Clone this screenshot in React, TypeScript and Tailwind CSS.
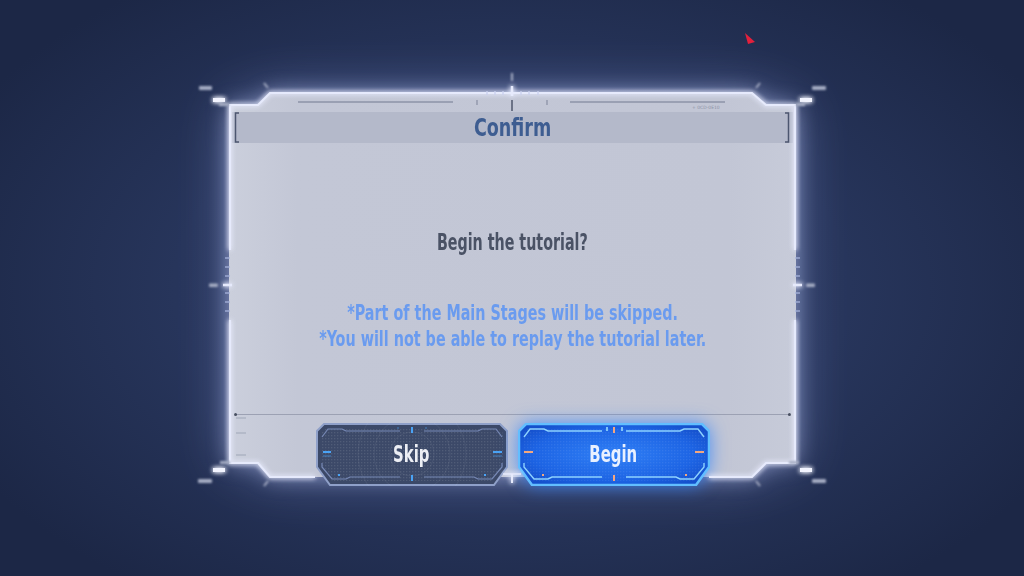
import type { ReactNode } from "react";

const FONT = "[font-family:'DejaVu_Sans_Condensed','DejaVu_Sans',sans-serif]";

// narrow game-style lettering: condensed bold squeezed horizontally
function Cond({ children, className = "" }: { children: ReactNode; className?: string }) {
  return <span className={`inline-block whitespace-nowrap font-bold ${className}`}>{children}</span>;
}

function Cursor() {
  return (
    <svg className="absolute left-[743px] top-[31px]" width="16" height="16" viewBox="0 0 16 16">
      <polygon points="2,2 12,11 5,13" fill="#e3203c" />
    </svg>
  );
}

function FrameOverlay() {
  const leftTicks = [180, 189, 198, 215, 224, 233];
  return (
    <svg
      className="pointer-events-none absolute inset-0 overflow-visible"
      width="630"
      height="420"
      viewBox="0 0 630 420"
    >
      <defs>
        <filter id="glow" filterUnits="userSpaceOnUse" x="-20" y="-20" width="670" height="460">
          <feGaussianBlur stdDeviation="2.4" result="b" />
          <feMerge>
            <feMergeNode in="b" />
            <feMergeNode in="b" />
            <feMergeNode in="SourceGraphic" />
          </feMerge>
        </filter>
        <filter id="soft" filterUnits="userSpaceOnUse" x="-20" y="-20" width="670" height="460">
          <feGaussianBlur stdDeviation="0.8" />
        </filter>
      </defs>

      {/* outer frame */}
      <g filter="url(#glow)" stroke="#e6eafc" strokeWidth="2.2" fill="none">
        <polyline points="33,172 33,27 61,27 73,15 555,15 569,27 598,27 598,172" />
        <polyline points="33,242 33,385 61,385 73,399 118,399" />
        <polyline points="598,242 598,385 569,385 555,399 512,399" />
        <line x1="315" y1="8" x2="315" y2="18" strokeWidth="2.5" />
        <line x1="26" y1="207" x2="35" y2="207" strokeWidth="2.5" />
        <line x1="596" y1="207" x2="605" y2="207" strokeWidth="2.5" />
        <line x1="306" y1="396" x2="324" y2="396" strokeWidth="1.5" />
        <line x1="315" y1="396" x2="315" y2="405" strokeWidth="2" />
      </g>

      {/* corner marks */}
      <g filter="url(#glow)">
        <rect x="16" y="20" width="12" height="4" fill="#f2f4ff" />
        <rect x="603" y="20" width="12" height="4" fill="#f2f4ff" />
        <rect x="16" y="390" width="12" height="4" fill="#f2f4ff" />
        <rect x="603" y="390" width="12" height="4" fill="#f2f4ff" />
      </g>
      <g fill="#a6adc4" filter="url(#soft)">
        <rect x="2" y="8" width="13" height="4" rx="1" />
        <rect x="615" y="8" width="14" height="4" rx="1" />
        <rect x="1" y="401" width="14" height="4" rx="1" />
        <rect x="615" y="401" width="14" height="4" rx="1" />
        <rect x="22" y="25" width="10" height="3" />
        <rect x="599" y="25" width="9" height="3" />
        <rect x="23" y="383" width="10" height="3" />
        <rect x="592" y="383" width="10" height="3" />
        <rect x="12" y="205.5" width="9" height="3.5" rx="1" />
        <rect x="609" y="205.5" width="9" height="3.5" rx="1" />
      </g>
      <g stroke="#a6adc4" strokeWidth="2" filter="url(#soft)">
        <line x1="67" y1="5" x2="71" y2="10" />
        <line x1="563" y1="5" x2="559" y2="10" />
        <line x1="67" y1="408" x2="71" y2="403" />
        <line x1="559" y1="403" x2="563" y2="408" />
        <line x1="315" y1="-5" x2="315" y2="3" />
      </g>

      {/* top centre scale */}
      <g stroke="#c9d0ee" strokeWidth="1.3">
        {[290, 298, 306, 324, 332, 341].map((x) => (
          <line key={x} x1={x} y1="13" x2={x} y2="17" />
        ))}
      </g>
      <g stroke="#8d93a7" strokeWidth="1.3">
        <line x1="101" y1="24" x2="256" y2="24" />
        <line x1="373" y1="24" x2="528" y2="24" />
        <line x1="280" y1="22" x2="280" y2="27" />
        <line x1="350" y1="22" x2="350" y2="27" />
      </g>
      <line x1="315" y1="22" x2="315" y2="33" stroke="#4e566b" strokeWidth="1.5" />
      <text x="495" y="31" fontSize="4.5" fill="#8d93a7" fontFamily="DejaVu Sans, sans-serif">
        + 0CD-0E10
      </text>

      {/* header brackets */}
      <g stroke="#4c566f" strokeWidth="1.5" fill="none">
        <polyline points="42,35 38.5,35 38.5,64 42,64" />
        <polyline points="588,35 591.5,35 591.5,64 588,64" />
      </g>

      {/* side scales */}
      <g stroke="#a8b3dc" strokeWidth="1.3">
        {leftTicks.map((y) => (
          <line key={"l" + y} x1="28" y1={y} x2="33" y2={y} />
        ))}
        {leftTicks.map((y) => (
          <line key={"r" + y} x1="598" y1={y} x2="603" y2={y} />
        ))}
      </g>

      {/* lower left dashes inside panel */}
      <g stroke="#adb3c3" strokeWidth="1.5">
        <line x1="39" y1="340" x2="49" y2="340" />
        <line x1="39" y1="355" x2="49" y2="355" />
        <line x1="39" y1="377" x2="49" y2="377" />
      </g>
    </svg>
  );
}

function SkipButton() {
  return (
    <button className="relative flex h-[63px] w-[192px] items-center justify-center">
      <svg className="absolute inset-0" width="192" height="63" viewBox="0 0 192 63">
        <defs>
          <pattern id="skipDots" width="3" height="3" patternUnits="userSpaceOnUse">
            <rect width="1.3" height="1.3" fill="#ffffff" opacity="0.1" />
          </pattern>
        </defs>
        <polygon points="8,1 184,1 191,8 191,44 178,62 14,62 1,44 1,8" fill="#3c4968" stroke="#8fa0c9" strokeWidth="2" />
        <polygon points="10,5 182,5 187,10 187,43 176,58 16,58 5,43 5,10" fill="url(#skipDots)" />
        <g fill="none" stroke="#ffffff" strokeOpacity="0.06">
          <circle cx="96" cy="31" r="22" />
          <circle cx="96" cy="31" r="38" />
          <circle cx="96" cy="31" r="54" />
        </g>
        <g fill="none" stroke="#7789b6" strokeWidth="1.2">
          <polyline points="6,14 12,6 26,6 30,8 84,8" />
          <polyline points="108,8 162,8 166,6 180,6 186,14" />
          <polyline points="6,40 6,44 16,56 30,56 34,54 84,54" />
          <polyline points="108,54 158,54 162,56 176,56 186,44 186,40" />
        </g>
        <g stroke="#4aa3f5" strokeWidth="2">
          <line x1="7" y1="29" x2="15" y2="29" />
          <line x1="177" y1="29" x2="186" y2="29" />
          <line x1="96" y1="4" x2="96" y2="10" />
          <line x1="96" y1="52" x2="96" y2="58" />
        </g>
        <g stroke="#4aa3f5" strokeWidth="1" opacity="0.6">
          <line x1="7" y1="33" x2="15" y2="33" />
          <line x1="177" y1="33" x2="186" y2="33" />
          <line x1="82" y1="4" x2="82" y2="6" />
          <line x1="110" y1="4" x2="110" y2="6" />
        </g>
        <rect x="22" y="51" width="2" height="2" fill="#4aa3f5" />
        <rect x="168" y="51" width="2" height="2" fill="#4aa3f5" />
      </svg>
      <Cond className={`relative text-[23px] leading-none text-[#eceef4] [transform:scaleX(0.72)] ${FONT}`}>Skip</Cond>
    </button>
  );
}

function BeginButton() {
  return (
    <button className="relative flex h-[63px] w-[192px] items-center justify-center [filter:drop-shadow(0_0_9px_rgba(40,125,255,0.75))]">
      <svg className="absolute inset-0" width="192" height="63" viewBox="0 0 192 63">
        <defs>
          <radialGradient id="beginFill" cx="50%" cy="50%" r="60%">
            <stop offset="0%" stopColor="#2f7ff6" />
            <stop offset="70%" stopColor="#1d64e4" />
            <stop offset="100%" stopColor="#1550cc" />
          </radialGradient>
          <pattern id="beginDots" width="3" height="3" patternUnits="userSpaceOnUse">
            <rect width="1.3" height="1.3" fill="#ffffff" opacity="0.07" />
          </pattern>
        </defs>
        <polygon points="8,1 184,1 191,8 191,44 178,62 14,62 1,44 1,8" fill="url(#beginFill)" stroke="#62beff" strokeWidth="2.5" />
        <polygon points="10,5 182,5 187,10 187,43 176,58 16,58 5,43 5,10" fill="url(#beginDots)" />
        <g fill="none" stroke="#8dd2ff" strokeWidth="1.4">
          <polyline points="6,14 12,6 26,6 30,8 84,8" />
          <polyline points="108,8 162,8 166,6 180,6 186,14" />
          <polyline points="6,40 6,44 16,56 30,56 34,54 84,54" />
          <polyline points="108,54 158,54 162,56 176,56 186,44 186,40" />
        </g>
        <g stroke="#f3a77f" strokeWidth="2">
          <line x1="6" y1="29" x2="15" y2="29" />
          <line x1="177" y1="29" x2="186" y2="29" />
          <line x1="96" y1="4" x2="96" y2="10" />
          <line x1="96" y1="52" x2="96" y2="58" />
        </g>
        <g stroke="#9fe3ff" strokeWidth="1.5">
          <line x1="89" y1="4" x2="89" y2="8" />
          <line x1="104" y1="4" x2="104" y2="8" />
        </g>
        <rect x="24" y="51" width="2" height="2" fill="#f3a77f" />
        <rect x="167" y="51" width="2" height="2" fill="#f3a77f" />
      </svg>
      <Cond className={`relative text-[23px] leading-none text-[#e9f1ff] [transform:scaleX(0.72)] ${FONT}`}>Begin</Cond>
    </button>
  );
}

function Dialog() {
  return (
    <div className="relative h-[420px] w-[630px] px-[32px] pt-[15px]">
      <div className="relative flex h-[384px] w-[567px] flex-col">
        {/* panel background with bevelled corners */}
        <div className="absolute inset-0 [filter:drop-shadow(0_0_10px_rgba(200,212,255,0.55))_drop-shadow(0_0_24px_rgba(160,175,240,0.4))]">
          <div className="absolute inset-0 bg-[linear-gradient(90deg,#cbcfdc_0%,#c3c7d6_12%,#c2c6d5_88%,#c7cbd9_100%)] [clip-path:polygon(0_12px,29px_12px,41px_0,523px_0,537px_12px,100%_12px,100%_370px,537px_370px,523px_100%,41px_100%,29px_370px,0_370px)]" />
        </div>

        <div className={`relative flex flex-col pt-[19px] ${FONT}`}>
          <div className="mx-[3px] flex h-[31px] items-center justify-center bg-[#b4b9ca]">
            <Cond className="text-[25px] leading-none text-[#3e5d91] [transform:scaleX(0.78)]">Confirm</Cond>
          </div>

          <div className="mt-[84px] flex h-[30px] items-center justify-center">
            <Cond className="text-[23px] leading-none text-[#4a5265] [transform:scaleX(0.69)]">Begin the tutorial?</Cond>
          </div>

          <div className="mt-[43px] flex flex-col items-center text-[21px] leading-[26px] text-[#6a9bef]">
            <Cond className="[transform:scaleX(0.76)]">*Part of the Main Stages will be skipped.</Cond>
            <Cond className="[transform:scaleX(0.76)]">*You will not be able to replay the tutorial later.</Cond>
          </div>

          <div className="relative mx-[5px] mt-[62px] h-px bg-[#9ca1b3]">
            <div className="absolute -top-px left-0 h-[3px] w-[3px] rounded-full bg-[#3d4456]" />
            <div className="absolute -top-px right-0 h-[3px] w-[3px] rounded-full bg-[#3d4456]" />
          </div>

          <div className="mt-[8px] flex justify-center gap-[10px]">
            <SkipButton />
            <BeginButton />
          </div>
        </div>
      </div>
      <FrameOverlay />
    </div>
  );
}

export default function App() {
  return (
    <div className="relative h-[576px] w-[1024px] overflow-hidden bg-[radial-gradient(ellipse_60%_65%_at_50%_50%,#2d3c63_0%,#27355b_55%,#1c2746_100%)]">
      <div className="flex h-full items-center justify-center">
        <Dialog />
      </div>
      <Cursor />
    </div>
  );
}
